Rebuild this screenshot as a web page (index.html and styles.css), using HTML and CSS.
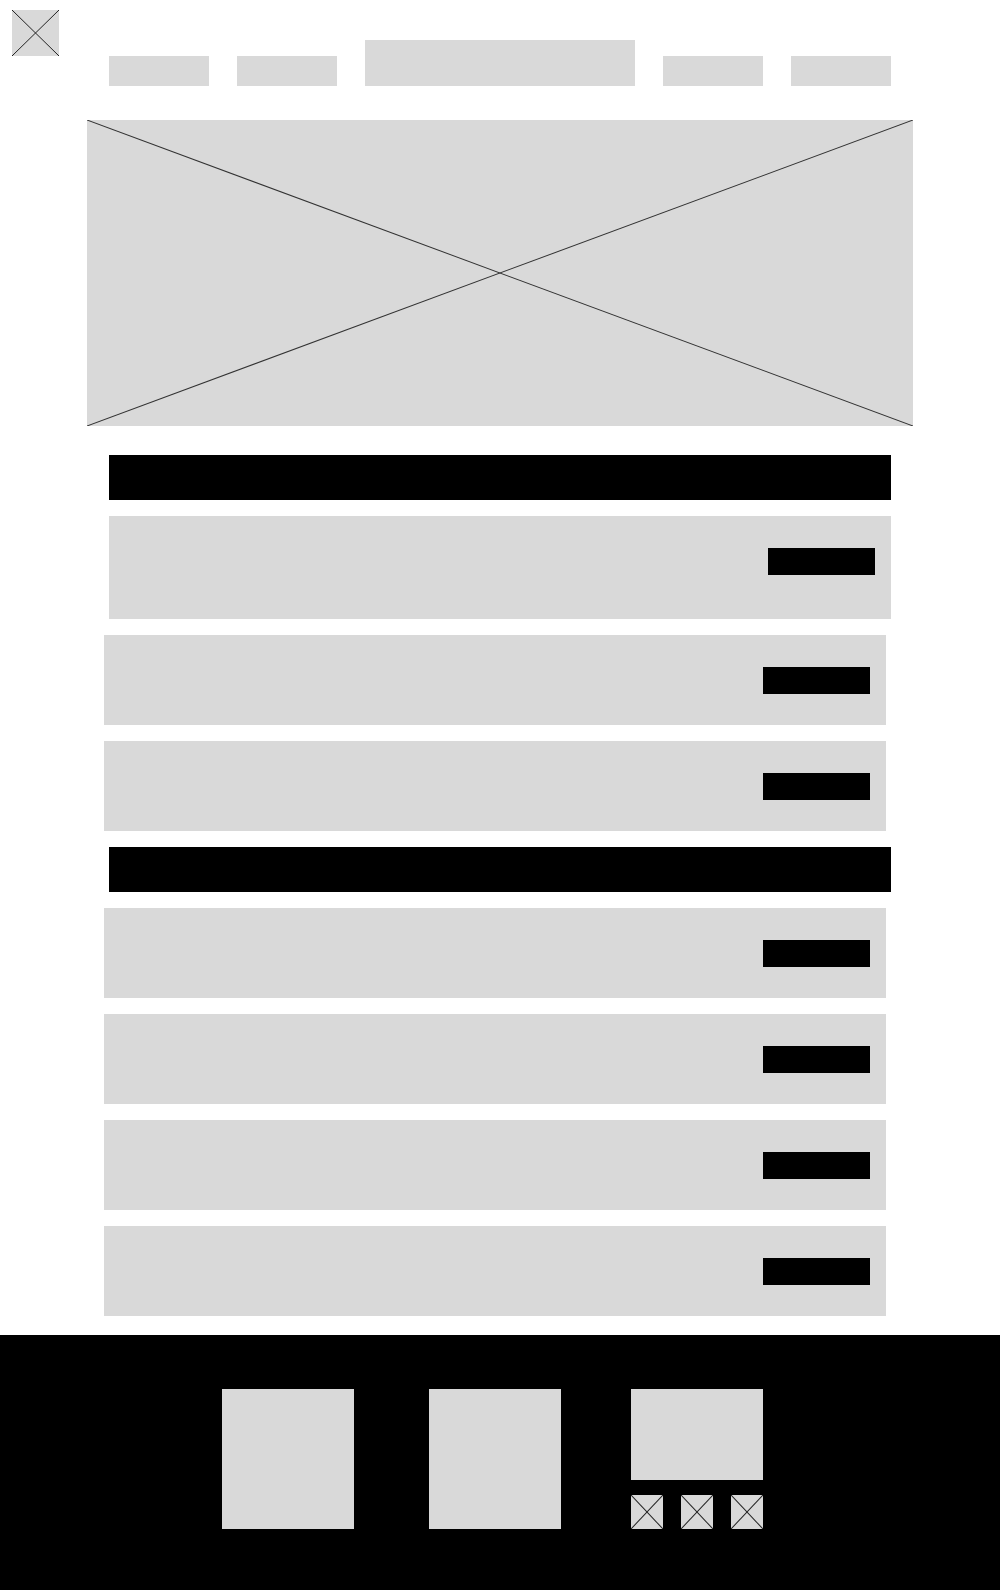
FILE: index.html
```html
<!DOCTYPE html>
<html lang="en">

<head>
  <meta charset="UTF-8">
  <meta name="viewport" content="width=device-width, initial-scale=1.0">
  <title>Wireframe</title>
  <link rel="stylesheet" href="styles.css">
</head>

<body>
  <header class="site-header">
    <div class="logo">
      <svg class="cross" viewBox="0 0 10 10" preserveAspectRatio="none">
        <line x1="0" y1="0" x2="10" y2="10" vector-effect="non-scaling-stroke"/>
        <line x1="10" y1="0" x2="0" y2="10" vector-effect="non-scaling-stroke"/>
      </svg>
    </div>
    <nav class="nav">
      <a class="nav-item" href="#"></a>
      <a class="nav-item" href="#"></a>
      <a class="nav-item nav-item--title" href="#"></a>
      <a class="nav-item" href="#"></a>
      <a class="nav-item" href="#"></a>
    </nav>
  </header>

  <div class="hero">
    <svg class="cross" viewBox="0 0 10 10" preserveAspectRatio="none">
      <line x1="0" y1="0" x2="10" y2="10" vector-effect="non-scaling-stroke"/>
      <line x1="10" y1="0" x2="0" y2="10" vector-effect="non-scaling-stroke"/>
    </svg>
  </div>

  <main class="list">
    <div class="list-bar"></div>
    <div class="card card--tall"><span class="card-btn"></span></div>
    <div class="card card--shifted"><span class="card-btn"></span></div>
    <div class="card card--shifted"><span class="card-btn"></span></div>

    <div class="list-bar"></div>
    <div class="card card--shifted"><span class="card-btn"></span></div>
    <div class="card card--shifted"><span class="card-btn"></span></div>
    <div class="card card--shifted"><span class="card-btn"></span></div>
    <div class="card card--shifted"><span class="card-btn"></span></div>
  </main>

  <footer class="site-footer">
    <div class="footer-box"></div>
    <div class="footer-box footer-box--second"></div>
    <div class="footer-col">
      <div class="footer-box footer-box--short"></div>
      <div class="social">
        <span class="social-icon">
          <svg class="cross" viewBox="0 0 10 10" preserveAspectRatio="none">
            <line x1="0" y1="0" x2="10" y2="10" vector-effect="non-scaling-stroke"/>
            <line x1="10" y1="0" x2="0" y2="10" vector-effect="non-scaling-stroke"/>
          </svg>
        </span>
        <span class="social-icon">
          <svg class="cross" viewBox="0 0 10 10" preserveAspectRatio="none">
            <line x1="0" y1="0" x2="10" y2="10" vector-effect="non-scaling-stroke"/>
            <line x1="10" y1="0" x2="0" y2="10" vector-effect="non-scaling-stroke"/>
          </svg>
        </span>
        <span class="social-icon">
          <svg class="cross" viewBox="0 0 10 10" preserveAspectRatio="none">
            <line x1="0" y1="0" x2="10" y2="10" vector-effect="non-scaling-stroke"/>
            <line x1="10" y1="0" x2="0" y2="10" vector-effect="non-scaling-stroke"/>
          </svg>
        </span>
      </div>
    </div>
  </footer>
</body>

</html>
```

FILE: styles.css
```css
body {
  margin: 0;
  background: #fff;
  font-family: "Liberation Sans", Arial, sans-serif;
}

.cross {
  display: block;
  width: 100%;
  height: 100%;
}

.cross line {
  stroke: #222;
  stroke-width: 1;
}

/* header */
.site-header {
  display: grid;
  grid-template-columns: 109px auto 109px;
  padding-top: 10px;
}

.logo {
  width: 47px;
  height: 46px;
  margin-left: 12px;
  background: #d9d9d9;
}

.nav {
  display: flex;
  align-items: flex-end;
  gap: 28px;
  margin-top: 30px;
}

.nav-item {
  display: block;
  width: 100px;
  height: 30px;
  background: #d9d9d9;
}

.nav-item--title {
  width: 270px;
  height: 46px;
}

/* hero */
.hero {
  height: 306px;
  margin: 34px 87px 0;
  background: #d9d9d9;
}

.hero .cross line {
  stroke: #333;
}

/* list */
.list {
  display: flex;
  flex-direction: column;
  align-items: flex-start;
  gap: 16px;
  margin: 29px 0 0 109px;
}

.list-bar {
  width: 782px;
  height: 45px;
  background: #000;
}

.card {
  display: flex;
  justify-content: flex-end;
  align-items: center;
  box-sizing: border-box;
  width: 782px;
  height: 90px;
  padding-right: 16px;
  background: #d9d9d9;
}

.card--tall {
  height: 103px;
  align-items: flex-start;
  padding-top: 32px;
}

.card--shifted {
  margin-left: -5px;
}

.card-btn {
  display: block;
  width: 107px;
  height: 27px;
  background: #000;
}

/* footer */
.site-footer {
  display: flex;
  align-items: flex-start;
  gap: 70px;
  height: 255px;
  box-sizing: border-box;
  margin-top: 19px;
  padding: 54px 0 0 222px;
  background: #000;
}

.footer-box {
  width: 132px;
  height: 140px;
  background: #d9d9d9;
}

.footer-box--second {
  margin-left: 5px;
}

.footer-box--short {
  height: 91px;
}

.footer-col {
  display: flex;
  flex-direction: column;
  gap: 15px;
}

.social {
  display: flex;
  gap: 18px;
}

.social-icon {
  display: block;
  width: 32px;
  height: 34px;
  background: #d9d9d9;
}
```
